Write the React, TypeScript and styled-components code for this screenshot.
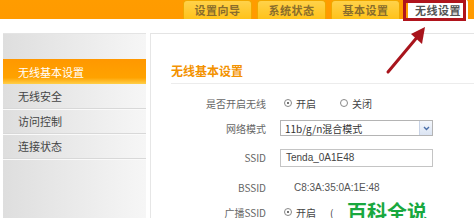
import styled, { createGlobalStyle } from 'styled-components';

const GlobalStyle = createGlobalStyle`
  html, body {
    margin: 0;
    padding: 0;
    background: #ffffff;
    overflow: hidden;
  }
  body {
    font-family: "Noto Sans CJK SC", "Liberation Sans", sans-serif;
  }
`;

const Page = styled.div`
  position: relative;
  width: 474px;
  height: 218px;
  overflow: hidden;
  background: #fff;
`;

const TopBar = styled.div`
  display: flex;
  align-items: flex-end;
  height: 19px;
  padding-left: 183px;
  gap: 5px;
  background: linear-gradient(#ff9c00, #ff9a00);
`;

const Tab = styled.div<{ $active?: boolean }>`
  display: flex;
  align-items: center;
  justify-content: center;
  flex-shrink: 0;
  width: ${(p) => (p.$active ? 58 : 67)}px;
  height: ${(p) => (p.$active ? 19 : 18)}px;
  border-radius: 4px 4px 0 0;
  border: 1px solid ${(p) => (p.$active ? '#fff' : '#f0a800')};
  border-bottom: none;
  background: ${(p) => (p.$active ? '#ffffff' : 'linear-gradient(#ffd24a, #ffc21a)')};
  color: ${(p) => (p.$active ? '#555' : '#8a6d2c')};
  font-size: 11px;
  font-weight: bold;
  letter-spacing: 0.5px;
  margin-left: ${(p) => (p.$active ? 3 : 0)}px;
`;

const Body = styled.div`
  display: flex;
  margin-top: 14px;
  gap: 4px;
  padding-left: 3px;
  height: 185px;
`;

const Sidebar = styled.div`
  width: 143px;
  flex-shrink: 0;
  border-top: 1px solid #e4e4e4;
  background: linear-gradient(90deg, #dedede, #f6f6f6);
  padding-top: 25px;
`;

const MenuItem = styled.div<{ $active?: boolean }>`
  height: ${(p) => (p.$active ? 25 : 24)}px;
  display: flex;
  align-items: center;
  padding-left: 15px;
  font-size: 11px;
  color: ${(p) => (p.$active ? '#ffffff' : '#444')};
  background: ${(p) =>
    p.$active ? 'linear-gradient(#ff9800 0%, #ffa200 75%, #ffcf4a 100%)' : 'transparent'};
  border-bottom: ${(p) => (p.$active ? 'none' : '1px solid #d8d8d8')};
  box-shadow: ${(p) => (p.$active ? 'none' : '0 1px 0 #fafafa')};
`;

const Main = styled.div`
  flex: 1;
  border-top: 1px solid #e4e4e4;
  border-left: 1px solid #e6e6e6;
  padding: 24px 0 0 20px;
`;

const Heading = styled.div`
  color: #f39200;
  font-size: 12px;
  font-weight: bold;
  height: 25px;
  line-height: 25px;
  border-bottom: 1px solid #ececec;
`;

const Form = styled.div`
  display: grid;
  grid-template-columns: 95px 1fr;
  column-gap: 14px;
  padding-top: 7px;
`;

const Label = styled.div<{ $h: number }>`
  height: ${(p) => p.$h}px;
  display: flex;
  align-items: center;
  justify-content: flex-end;
  font-size: 10px;
  color: #666;
`;

const Field = styled.div<{ $h: number }>`
  height: ${(p) => p.$h}px;
  display: flex;
  align-items: center;
  font-size: 10px;
  color: #555;
`;

const RadioGroup = styled.div`
  display: flex;
  align-items: center;
  gap: 4px;
  margin-left: 4px;
`;

const RadioDot = styled.span<{ $on?: boolean }>`
  width: 8px;
  height: 8px;
  border: 1px solid #888;
  border-radius: 50%;
  position: relative;
  box-sizing: border-box;
  &::after {
    content: '';
    display: ${(p) => (p.$on ? 'block' : 'none')};
    position: absolute;
    left: 2px;
    top: 2px;
    width: 2px;
    height: 2px;
    border-radius: 50%;
    background: #444;
  }
`;

const RadioText = styled.span<{ $gap?: number }>`
  margin-right: ${(p) => p.$gap ?? 20}px;
  color: #444;
`;

const Select = styled.div`
  width: 153px;
  height: 16px;
  box-sizing: border-box;
  border: 1px solid #b4b4b4;
  display: flex;
  align-items: center;
  justify-content: space-between;
  padding-left: 4px;
  font-size: 10px;
  color: #333;
`;

const SelectArrow = styled.div`
  width: 12px;
  height: 14px;
  display: flex;
  align-items: center;
  justify-content: center;
  background: linear-gradient(#f4f7fc, #dbe4f3);
  border-left: 1px solid #c8d3e6;
`;

const Input = styled.div`
  width: 153px;
  height: 18px;
  box-sizing: border-box;
  border: 1px solid #c4c4c4;
  display: flex;
  align-items: center;
  padding-left: 5px;
  font-size: 10px;
  color: #444;
  font-family: "Liberation Sans", "Noto Sans CJK SC", sans-serif;
`;

const Plain = styled.div`
  padding-left: 14px;
  font-size: 10px;
  color: #555;
  font-family: "Liberation Sans", sans-serif;
`;

const Callout = styled.div`
  position: absolute;
  left: 403px;
  top: 0;
  width: 63px;
  height: 21px;
  box-sizing: border-box;
  border: 3px solid #b0141c;
`;

const Arrow = styled.svg`
  position: absolute;
  left: 380px;
  top: 22px;
`;

const Watermark = styled.div`
  position: absolute;
  left: 347px;
  top: 197px;
  font-size: 20px;
  font-weight: bold;
  color: #19a83f;
  white-space: nowrap;
`;

const tabs = ['设置向导', '系统状态', '基本设置', '无线设置'];
const menu = ['无线基本设置', '无线安全', '访问控制', '连接状态'];

const App = () => {
  return (
    <Page>
      <GlobalStyle />
      <TopBar>
        {tabs.map((t, i) => (
          <Tab key={t} $active={i === 3}>
            {t}
          </Tab>
        ))}
        <Tab style={{ marginLeft: 4 }} />
      </TopBar>
      <Body>
        <Sidebar>
          {menu.map((m, i) => (
            <MenuItem key={m} $active={i === 0}>
              {m}
            </MenuItem>
          ))}
        </Sidebar>
        <Main>
          <Heading>无线基本设置</Heading>
          <Form>
            <Label $h={24}>是否开启无线</Label>
            <Field $h={24}>
              <RadioGroup>
                <RadioDot $on />
                <RadioText>开启</RadioText>
                <RadioDot />
                <RadioText>关闭</RadioText>
              </RadioGroup>
            </Field>

            <Label $h={26}>网络模式</Label>
            <Field $h={26}>
              <Select>
                11b/g/n混合模式
                <SelectArrow>
                  <svg width="7" height="5" viewBox="0 0 7 5">
                    <path d="M1 1 L3.5 3.5 L6 1" fill="none" stroke="#4a6fa8" strokeWidth="1.4" />
                  </svg>
                </SelectArrow>
              </Select>
            </Field>

            <Label $h={33}>SSID</Label>
            <Field $h={33}>
              <Input>Tenda_0A1E48</Input>
            </Field>

            <Label $h={26}>BSSID</Label>
            <Field $h={26}>
              <Plain>C8:3A:35:0A:1E:48</Plain>
            </Field>

            <Label $h={24}>广播SSID</Label>
            <Field $h={24}>
              <RadioGroup>
                <RadioDot $on />
                <RadioText $gap={10}>开启</RadioText>
                <RadioText>(</RadioText>
              </RadioGroup>
            </Field>
          </Form>
        </Main>
      </Body>
      <Callout />
      <Arrow width="60" height="60" viewBox="0 0 60 60">
        <path d="M8 50 L39 13" stroke="#a8141c" strokeWidth="3" strokeLinecap="round" />
        <path d="M45 5 L31 12 L42 22 Z" fill="#a8141c" />
      </Arrow>
      <Watermark>百科全说</Watermark>
    </Page>
  );
};

export default App;
